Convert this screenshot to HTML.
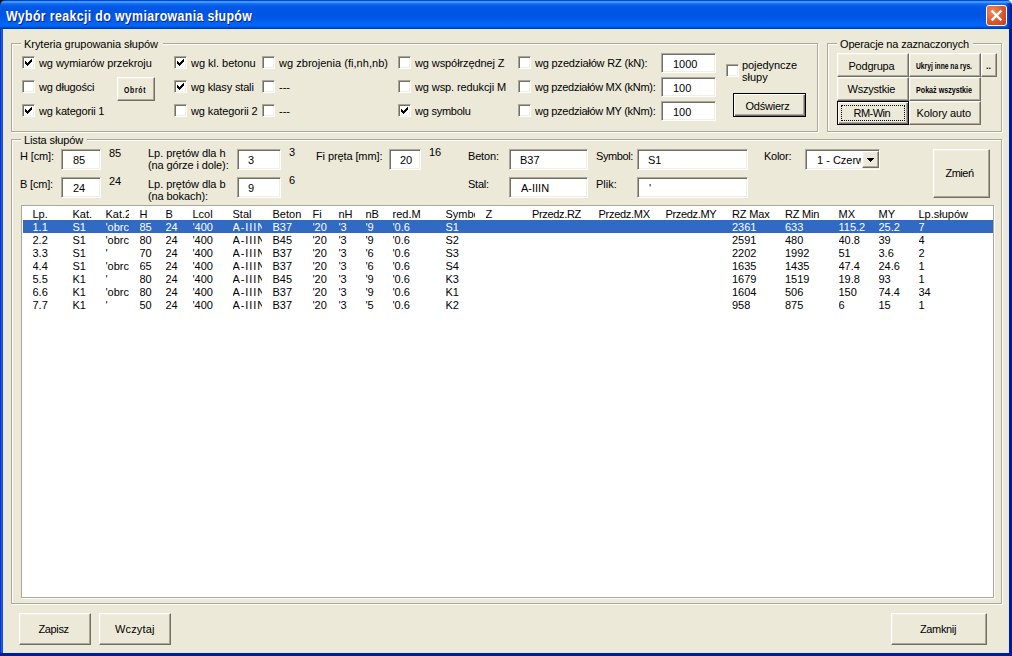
<!DOCTYPE html>
<html><head><meta charset="utf-8"><style>
*{margin:0;padding:0}
html,body{width:1012px;height:656px;overflow:hidden;background:#ECE9D8;position:relative}
body>div,body>svg{position:absolute}
.t,.gt0{position:absolute;font-family:"Liberation Sans",sans-serif;font-size:11px;line-height:13px;white-space:pre;color:#000}
.sm{position:absolute;font-family:"Liberation Sans",sans-serif;font-size:9px;font-weight:bold;line-height:10px;white-space:pre;color:#000}
.gt{position:absolute;background:#ECE9D8}
.title{position:absolute;font-family:"Liberation Sans",sans-serif;font-size:14px;letter-spacing:0.43px;transform:scaleX(0.88);transform-origin:0 0;font-weight:bold;line-height:15px;white-space:pre;color:#fff;text-shadow:1px 1px 0 #0A1E8C}
.eG{position:absolute;border:1px solid #ACA899;box-sizing:border-box}
.eW{position:absolute;border:1px solid #fff;box-sizing:border-box}
.cb{position:absolute;width:13px;height:13px;box-sizing:border-box;background:#fff;border:1px solid;border-color:#ACA899 #fff #fff #ACA899;box-shadow:inset 1px 1px 0 #716F64,inset -1px -1px 0 #F1EFE2}
.inp{position:absolute;box-sizing:border-box;background:#fff;border:1px solid;border-color:#ACA899 #fff #fff #ACA899;box-shadow:inset 1px 1px 0 #716F64,inset -1px -1px 0 #F1EFE2}
.btn{position:absolute;box-sizing:border-box;background:#ECE9D8;border:1px solid;border-color:#fff #716F64 #716F64 #fff;box-shadow:inset -1px -1px 0 #ACA899,inset 1px 1px 0 #F1EFE2}
.btn.def{border:1px solid #000;box-shadow:inset 1px 1px 0 #fff,inset -1px -1px 0 #716F64,inset -2px -2px 0 #ACA899}
.focus{position:absolute;box-sizing:border-box;border:1px dotted #000}
.close{position:absolute;width:21px;height:21px;box-sizing:border-box;border:1px solid #fff;border-radius:3px;background:radial-gradient(circle at 30% 30%,#F08A60,#D8522A 60%,#C43E18)}
</style></head><body>
<div style="left:0;top:0;width:6px;height:6px;background:#101820"></div>
<div style="left:1007px;top:0;width:5px;height:5px;background:#fff"></div>
<div style="left:0;top:0;width:1012px;height:29px;background:linear-gradient(#0047D0 0px,#0047D0 1px,#3D95FF 1px,#3D95FF 3px,#1C78F4 3px,#0A62EC 5px,#0058E6 7px,#0055E2 15px,#005AE8 19px,#0063F5 23px,#0066FA 26px,#0058E0 27px,#003FB8 28px,#0035A8 29px);border-radius:6px 5px 0 0"></div>
<div style="left:1006px;top:3px;width:6px;height:26px;background:linear-gradient(90deg,rgba(0,40,170,0) 0,rgba(0,40,170,0.5) 2px,#0028A8 4px,#001C9C 6px);border-top-right-radius:3px"></div>
<div style="left:0;top:29px;width:3px;height:627px;background:linear-gradient(90deg,#0033CC 0,#0033CC 1px,#2A5BE0 1px,#2A5BE0 2px,#1D4BA8 2px)"></div>
<div style="left:3px;top:29px;width:1px;height:624px;background:#D8EEFF"></div>
<div style="left:1009px;top:29px;width:3px;height:627px;background:#001C9C"></div>
<div style="left:1008px;top:29px;width:1px;height:624px;background:#D8EEFF"></div>
<div style="left:0;top:653px;width:1012px;height:3px;background:#001C9C"></div>
<div style="left:3px;top:652px;width:1006px;height:1px;background:#D8EEFF"></div>
<div style="left:3px;top:29px;width:1006px;height:1px;background:#D8EEFF"></div>
<div class="title" style="left:6px;top:9px">Wybór reakcji do wymiarowania słupów</div>
<div class="close" style="left:986px;top:5px"><svg width="21" height="21" style="position:absolute;left:-1px;top:-1px"><path d="M6.5 6.5L14.5 14.5M14.5 6.5L6.5 14.5" stroke="#fff" stroke-width="2.4" stroke-linecap="square"/></svg></div>
<div class="eW" style="left:12px;top:44px;width:807px;height:89px"></div>
<div class="eG" style="left:11px;top:43px;width:807px;height:89px"></div>
<div class="gt" style="left:21px;top:40px;width:142px;height:8px"></div>
<div class="gt0" style="left:24px;top:38px;letter-spacing:-0.044px;">Kryteria grupowania słupów</div>
<div class="cb" style="left:22px;top:56px"><svg width="7" height="7" style="position:absolute;left:2px;top:2px" shape-rendering="crispEdges"><path d="M6 0h1v3h-1v1h-1v1h-1v1h-1v1h-1v-1h-1v-1h-1v-3h1v1h1v1h1v-1h1v-1h1z" fill="#000"/></svg></div>
<div class="t" style="left:39px;top:57px;letter-spacing:-0.077px;">wg wymiarów przekroju</div>
<div class="cb" style="left:22px;top:80px"></div>
<div class="t" style="left:39px;top:81px;letter-spacing:-0.199px;">wg długości</div>
<div class="cb" style="left:22px;top:104px"><svg width="7" height="7" style="position:absolute;left:2px;top:2px" shape-rendering="crispEdges"><path d="M6 0h1v3h-1v1h-1v1h-1v1h-1v1h-1v-1h-1v-1h-1v-3h1v1h1v1h1v-1h1v-1h1z" fill="#000"/></svg></div>
<div class="t" style="left:39px;top:105px;letter-spacing:-0.184px;">wg kategorii 1</div>
<div class="btn" style="left:117px;top:77px;width:38px;height:24px"></div>
<div class="sm" style="left:124px;top:85px;transform:scaleX(0.7559);transform-origin:0 0;letter-spacing:1.0px;">Obrót</div>
<div class="cb" style="left:174px;top:56px"><svg width="7" height="7" style="position:absolute;left:2px;top:2px" shape-rendering="crispEdges"><path d="M6 0h1v3h-1v1h-1v1h-1v1h-1v1h-1v-1h-1v-1h-1v-3h1v1h1v1h1v-1h1v-1h1z" fill="#000"/></svg></div>
<div class="t" style="left:191px;top:57px;letter-spacing:-0.018px;">wg kl. betonu</div>
<div class="cb" style="left:174px;top:80px"><svg width="7" height="7" style="position:absolute;left:2px;top:2px" shape-rendering="crispEdges"><path d="M6 0h1v3h-1v1h-1v1h-1v1h-1v1h-1v-1h-1v-1h-1v-3h1v1h1v1h1v-1h1v-1h1z" fill="#000"/></svg></div>
<div class="t" style="left:191px;top:81px;letter-spacing:-0.150px;">wg klasy stali</div>
<div class="cb" style="left:174px;top:104px"></div>
<div class="t" style="left:191px;top:105px;letter-spacing:-0.091px;">wg kategorii 2</div>
<div class="cb" style="left:262px;top:56px"></div>
<div class="t" style="left:279px;top:57px;letter-spacing:0.033px;">wg zbrojenia (fi,nh,nb)</div>
<div class="cb" style="left:262px;top:80px"></div>
<div class="t" style="left:279px;top:81px;">---</div>
<div class="cb" style="left:262px;top:104px"></div>
<div class="t" style="left:279px;top:105px;">---</div>
<div class="cb" style="left:398px;top:56px"></div>
<div class="t" style="left:415px;top:57px;letter-spacing:-0.094px;">wg współrzędnej Z</div>
<div class="cb" style="left:398px;top:80px"></div>
<div class="t" style="left:415px;top:81px;letter-spacing:-0.107px;">wg wsp. redukcji M</div>
<div class="cb" style="left:398px;top:104px"><svg width="7" height="7" style="position:absolute;left:2px;top:2px" shape-rendering="crispEdges"><path d="M6 0h1v3h-1v1h-1v1h-1v1h-1v1h-1v-1h-1v-1h-1v-3h1v1h1v1h1v-1h1v-1h1z" fill="#000"/></svg></div>
<div class="t" style="left:415px;top:105px;letter-spacing:-0.238px;">wg symbolu</div>
<div class="cb" style="left:518px;top:56px"></div>
<div class="t" style="left:535px;top:57px;letter-spacing:-0.165px;">wg pzedziałów RZ (kN):</div>
<div class="cb" style="left:518px;top:80px"></div>
<div class="t" style="left:535px;top:81px;letter-spacing:-0.289px;">wg pzedziałów MX (kNm):</div>
<div class="cb" style="left:518px;top:104px"></div>
<div class="t" style="left:535px;top:105px;letter-spacing:-0.281px;">wg pzedziałów MY (kNm):</div>
<div class="inp" style="left:661px;top:53px;width:55px;height:20px"></div>
<div class="t" style="left:673px;top:58px;">1000</div>
<div class="inp" style="left:661px;top:77px;width:55px;height:20px"></div>
<div class="t" style="left:673px;top:82px;">100</div>
<div class="inp" style="left:661px;top:101px;width:55px;height:20px"></div>
<div class="t" style="left:673px;top:106px;">100</div>
<div class="cb" style="left:726px;top:64px"></div>
<div class="t" style="left:742px;top:59px;letter-spacing:-0.066px;">pojedyncze</div>
<div class="t" style="left:742px;top:71px;">słupy</div>
<div class="btn def" style="left:733px;top:93px;width:73px;height:24px"></div>
<div class="t" style="left:745.5px;top:100px;letter-spacing:-0.230px;">Odświerz</div>
<div class="eW" style="left:828px;top:44px;width:175px;height:89px"></div>
<div class="eG" style="left:827px;top:43px;width:175px;height:89px"></div>
<div class="gt" style="left:837px;top:40px;width:136px;height:8px"></div>
<div class="gt0" style="left:840px;top:38px;letter-spacing:-0.154px;">Operacje na zaznaczonych</div>
<div class="btn" style="left:837px;top:53px;width:72px;height:24px"></div>
<div class="t" style="left:848.5px;top:60px;letter-spacing:-0.227px;">Podgrupa</div>
<div class="btn" style="left:909px;top:53px;width:72px;height:24px"></div>
<div class="sm" style="left:916px;top:61px;transform:scaleX(0.7462);transform-origin:0 0;letter-spacing:0px;">Ukryj inne na rys.</div>
<div class="btn" style="left:981px;top:53px;width:16px;height:24px"></div>
<div class="sm" style="left:986px;top:61px;">..</div>
<div class="btn" style="left:837px;top:77px;width:72px;height:24px"></div>
<div class="t" style="left:847.5px;top:83px;letter-spacing:-0.211px;">Wszystkie</div>
<div class="btn" style="left:909px;top:77px;width:72px;height:24px"></div>
<div class="sm" style="left:916px;top:85px;transform:scaleX(0.7938);transform-origin:0 0;letter-spacing:0px;">Pokaż wszystkie</div>
<div class="btn def" style="left:837px;top:101px;width:72px;height:24px"></div>
<div class="focus" style="left:841px;top:105px;width:64px;height:16px"></div>
<div class="t" style="left:853.5px;top:107px;letter-spacing:-0.536px;">RM-Win</div>
<div class="btn" style="left:909px;top:101px;width:72px;height:24px"></div>
<div class="t" style="left:916.5px;top:107px;letter-spacing:-0.096px;">Kolory auto</div>
<div class="eW" style="left:12px;top:140px;width:991px;height:465px"></div>
<div class="eG" style="left:11px;top:139px;width:991px;height:465px"></div>
<div class="gt" style="left:21px;top:136px;width:66px;height:8px"></div>
<div class="gt0" style="left:24px;top:134px;letter-spacing:-0.129px;">Lista słupów</div>
<div class="t" style="left:20px;top:150px;letter-spacing:-0.121px;">H [cm]:</div>
<div class="inp" style="left:61px;top:149px;width:40px;height:21px"></div>
<div class="t" style="left:73px;top:154px;">85</div>
<div class="t" style="left:109px;top:147px;">85</div>
<div class="t" style="left:20px;top:178px;letter-spacing:-0.176px;">B [cm]:</div>
<div class="inp" style="left:61px;top:177px;width:40px;height:21px"></div>
<div class="t" style="left:73px;top:182px;">24</div>
<div class="t" style="left:109px;top:175px;">24</div>
<div class="t" style="left:148px;top:147px;letter-spacing:-0.049px;">Lp. prętów dla h</div>
<div class="t" style="left:148px;top:159px;letter-spacing:-0.108px;">(na górze i dole):</div>
<div class="inp" style="left:237px;top:149px;width:44px;height:21px"></div>
<div class="t" style="left:248px;top:154px;">3</div>
<div class="t" style="left:289px;top:146px;">3</div>
<div class="t" style="left:148px;top:178px;letter-spacing:-0.049px;">Lp. prętów dla b</div>
<div class="t" style="left:148px;top:190px;letter-spacing:-0.096px;">(na bokach):</div>
<div class="inp" style="left:237px;top:177px;width:44px;height:21px"></div>
<div class="t" style="left:248px;top:182px;">9</div>
<div class="t" style="left:289px;top:174px;">6</div>
<div class="t" style="left:316px;top:150px;letter-spacing:-0.103px;">Fi pręta [mm]:</div>
<div class="inp" style="left:389px;top:149px;width:32px;height:21px"></div>
<div class="t" style="left:400px;top:154px;">20</div>
<div class="t" style="left:429px;top:146px;">16</div>
<div class="t" style="left:468px;top:150px;letter-spacing:-0.169px;">Beton:</div>
<div class="t" style="left:468px;top:178px;letter-spacing:-0.223px;">Stal:</div>
<div class="inp" style="left:509px;top:149px;width:79px;height:21px"></div>
<div class="t" style="left:520px;top:154px;">B37</div>
<div class="inp" style="left:509px;top:177px;width:79px;height:21px"></div>
<div class="t" style="left:521px;top:182px;">A-IIIN</div>
<div class="t" style="left:596px;top:150px;letter-spacing:-0.393px;">Symbol:</div>
<div class="t" style="left:596px;top:178px;">Plik:</div>
<div class="inp" style="left:637px;top:149px;width:111px;height:21px"></div>
<div class="t" style="left:648px;top:154px;">S1</div>
<div class="inp" style="left:637px;top:177px;width:111px;height:21px"></div>
<div class="t" style="left:649px;top:182px;">'</div>
<div class="t" style="left:764px;top:150px;letter-spacing:-0.258px;">Kolor:</div>
<div class="inp" style="left:805px;top:149px;width:75px;height:21px"></div>
<div class="t" style="left:817px;top:154px;width:44px;overflow:hidden">1 - Czerwony</div>
<div class="btn" style="left:862px;top:151px;width:17px;height:17px"></div>
<svg style="left:867px;top:158px" width="8" height="5" shape-rendering="crispEdges"><path d="M0 0h7v1h-1v1h-1v1h-1v1h-1v-1h-1v-1h-1v-1h-1z" fill="#000"/></svg>
<div class="btn" style="left:933px;top:149px;width:57px;height:49px"></div>
<div class="t" style="left:945.5px;top:167px;letter-spacing:-0.512px;">Zmień</div>
<div style="left:22px;top:206px;width:972px;height:392px;background:#fff"></div>
<div class="eW" style="left:22px;top:206px;width:973px;height:393px"></div>
<div class="eG" style="left:21px;top:205px;width:973px;height:393px"></div>
<div style="left:23px;top:220px;width:970px;height:13px;background:#316AC5"></div>
<div class="t" style="left:32.5px;top:208px;width:29.0px;overflow:hidden;color:#000;">Lp.</div>
<div class="t" style="left:72.5px;top:208px;width:22.0px;overflow:hidden;color:#000;">Kat.</div>
<div class="t" style="left:105.5px;top:208px;width:23.0px;overflow:hidden;color:#000;">Kat.2</div>
<div class="t" style="left:139.5px;top:208px;width:15.0px;overflow:hidden;color:#000;">H</div>
<div class="t" style="left:165.5px;top:208px;width:16.0px;overflow:hidden;color:#000;">B</div>
<div class="t" style="left:192.5px;top:208px;width:29.0px;overflow:hidden;color:#000;">Lcol</div>
<div class="t" style="left:232.5px;top:208px;width:29.0px;overflow:hidden;color:#000;">Stal</div>
<div class="t" style="left:272.5px;top:208px;width:29.0px;overflow:hidden;color:#000;">Beton</div>
<div class="t" style="left:312.5px;top:208px;width:15.0px;overflow:hidden;color:#000;">Fi</div>
<div class="t" style="left:338.5px;top:208px;width:16.0px;overflow:hidden;color:#000;">nH</div>
<div class="t" style="left:365.5px;top:208px;width:16.0px;overflow:hidden;color:#000;">nB</div>
<div class="t" style="left:392.5px;top:208px;width:42.0px;overflow:hidden;color:#000;">red.M</div>
<div class="t" style="left:445.5px;top:208px;width:29.0px;overflow:hidden;color:#000;">Symbol</div>
<div class="t" style="left:485.5px;top:208px;width:35.5px;overflow:hidden;color:#000;">Z</div>
<div class="t" style="left:532px;top:208px;width:55.5px;overflow:hidden;color:#000;letter-spacing:-0.33px;">Przedz.RZ</div>
<div class="t" style="left:598.5px;top:208px;width:56.0px;overflow:hidden;color:#000;letter-spacing:-0.29px;">Przedz.MX</div>
<div class="t" style="left:665.5px;top:208px;width:55.5px;overflow:hidden;color:#000;letter-spacing:-0.34px;">Przedz.MY</div>
<div class="t" style="left:732px;top:208px;width:42px;overflow:hidden;color:#000;letter-spacing:-0.13px;">RZ Max</div>
<div class="t" style="left:785px;top:208px;width:42.5px;overflow:hidden;color:#000;letter-spacing:-0.2px;">RZ Min</div>
<div class="t" style="left:838.5px;top:208px;width:29.0px;overflow:hidden;color:#000;">MX</div>
<div class="t" style="left:878.5px;top:208px;width:29.0px;overflow:hidden;color:#000;">MY</div>
<div class="t" style="left:918.5px;top:208px;width:60.5px;overflow:hidden;color:#000;">Lp.słupów</div>
<div class="t" style="left:32.5px;top:221px;width:29.0px;overflow:hidden;color:#fff;">1.1</div>
<div class="t" style="left:72.5px;top:221px;width:22.0px;overflow:hidden;color:#fff;">S1</div>
<div class="t" style="left:105.5px;top:221px;width:23.0px;overflow:hidden;color:#fff;">'obrc</div>
<div class="t" style="left:139.5px;top:221px;width:15.0px;overflow:hidden;color:#fff;">85</div>
<div class="t" style="left:165.5px;top:221px;width:16.0px;overflow:hidden;color:#fff;">24</div>
<div class="t" style="left:192.5px;top:221px;width:29.0px;overflow:hidden;color:#fff;">'400</div>
<div class="t" style="left:232.5px;top:221px;width:29.0px;overflow:hidden;color:#fff;letter-spacing:0.9px;">A-IIIN</div>
<div class="t" style="left:272.5px;top:221px;width:29.0px;overflow:hidden;color:#fff;">B37</div>
<div class="t" style="left:312.5px;top:221px;width:15.0px;overflow:hidden;color:#fff;">'20</div>
<div class="t" style="left:338.5px;top:221px;width:16.0px;overflow:hidden;color:#fff;">'3</div>
<div class="t" style="left:365.5px;top:221px;width:16.0px;overflow:hidden;color:#fff;">'9</div>
<div class="t" style="left:392.5px;top:221px;width:42.0px;overflow:hidden;color:#fff;">'0.6</div>
<div class="t" style="left:445.5px;top:221px;width:29.0px;overflow:hidden;color:#fff;">S1</div>
<div class="t" style="left:732px;top:221px;width:42px;overflow:hidden;color:#fff;">2361</div>
<div class="t" style="left:785px;top:221px;width:42.5px;overflow:hidden;color:#fff;">633</div>
<div class="t" style="left:838.5px;top:221px;width:29.0px;overflow:hidden;color:#fff;">115.2</div>
<div class="t" style="left:878.5px;top:221px;width:29.0px;overflow:hidden;color:#fff;">25.2</div>
<div class="t" style="left:918.5px;top:221px;width:60.5px;overflow:hidden;color:#fff;">7</div>
<div class="t" style="left:32.5px;top:234px;width:29.0px;overflow:hidden;color:#000;">2.2</div>
<div class="t" style="left:72.5px;top:234px;width:22.0px;overflow:hidden;color:#000;">S1</div>
<div class="t" style="left:105.5px;top:234px;width:23.0px;overflow:hidden;color:#000;">'obrc</div>
<div class="t" style="left:139.5px;top:234px;width:15.0px;overflow:hidden;color:#000;">80</div>
<div class="t" style="left:165.5px;top:234px;width:16.0px;overflow:hidden;color:#000;">24</div>
<div class="t" style="left:192.5px;top:234px;width:29.0px;overflow:hidden;color:#000;">'400</div>
<div class="t" style="left:232.5px;top:234px;width:29.0px;overflow:hidden;color:#000;letter-spacing:0.9px;">A-IIIN</div>
<div class="t" style="left:272.5px;top:234px;width:29.0px;overflow:hidden;color:#000;">B45</div>
<div class="t" style="left:312.5px;top:234px;width:15.0px;overflow:hidden;color:#000;">'20</div>
<div class="t" style="left:338.5px;top:234px;width:16.0px;overflow:hidden;color:#000;">'3</div>
<div class="t" style="left:365.5px;top:234px;width:16.0px;overflow:hidden;color:#000;">'9</div>
<div class="t" style="left:392.5px;top:234px;width:42.0px;overflow:hidden;color:#000;">'0.6</div>
<div class="t" style="left:445.5px;top:234px;width:29.0px;overflow:hidden;color:#000;">S2</div>
<div class="t" style="left:732px;top:234px;width:42px;overflow:hidden;color:#000;">2591</div>
<div class="t" style="left:785px;top:234px;width:42.5px;overflow:hidden;color:#000;">480</div>
<div class="t" style="left:838.5px;top:234px;width:29.0px;overflow:hidden;color:#000;">40.8</div>
<div class="t" style="left:878.5px;top:234px;width:29.0px;overflow:hidden;color:#000;">39</div>
<div class="t" style="left:918.5px;top:234px;width:60.5px;overflow:hidden;color:#000;">4</div>
<div class="t" style="left:32.5px;top:247px;width:29.0px;overflow:hidden;color:#000;">3.3</div>
<div class="t" style="left:72.5px;top:247px;width:22.0px;overflow:hidden;color:#000;">S1</div>
<div class="t" style="left:105.5px;top:247px;width:23.0px;overflow:hidden;color:#000;">'</div>
<div class="t" style="left:139.5px;top:247px;width:15.0px;overflow:hidden;color:#000;">70</div>
<div class="t" style="left:165.5px;top:247px;width:16.0px;overflow:hidden;color:#000;">24</div>
<div class="t" style="left:192.5px;top:247px;width:29.0px;overflow:hidden;color:#000;">'400</div>
<div class="t" style="left:232.5px;top:247px;width:29.0px;overflow:hidden;color:#000;letter-spacing:0.9px;">A-IIIN</div>
<div class="t" style="left:272.5px;top:247px;width:29.0px;overflow:hidden;color:#000;">B37</div>
<div class="t" style="left:312.5px;top:247px;width:15.0px;overflow:hidden;color:#000;">'20</div>
<div class="t" style="left:338.5px;top:247px;width:16.0px;overflow:hidden;color:#000;">'3</div>
<div class="t" style="left:365.5px;top:247px;width:16.0px;overflow:hidden;color:#000;">'6</div>
<div class="t" style="left:392.5px;top:247px;width:42.0px;overflow:hidden;color:#000;">'0.6</div>
<div class="t" style="left:445.5px;top:247px;width:29.0px;overflow:hidden;color:#000;">S3</div>
<div class="t" style="left:732px;top:247px;width:42px;overflow:hidden;color:#000;">2202</div>
<div class="t" style="left:785px;top:247px;width:42.5px;overflow:hidden;color:#000;">1992</div>
<div class="t" style="left:838.5px;top:247px;width:29.0px;overflow:hidden;color:#000;">51</div>
<div class="t" style="left:878.5px;top:247px;width:29.0px;overflow:hidden;color:#000;">3.6</div>
<div class="t" style="left:918.5px;top:247px;width:60.5px;overflow:hidden;color:#000;">2</div>
<div class="t" style="left:32.5px;top:260px;width:29.0px;overflow:hidden;color:#000;">4.4</div>
<div class="t" style="left:72.5px;top:260px;width:22.0px;overflow:hidden;color:#000;">S1</div>
<div class="t" style="left:105.5px;top:260px;width:23.0px;overflow:hidden;color:#000;">'obrc</div>
<div class="t" style="left:139.5px;top:260px;width:15.0px;overflow:hidden;color:#000;">65</div>
<div class="t" style="left:165.5px;top:260px;width:16.0px;overflow:hidden;color:#000;">24</div>
<div class="t" style="left:192.5px;top:260px;width:29.0px;overflow:hidden;color:#000;">'400</div>
<div class="t" style="left:232.5px;top:260px;width:29.0px;overflow:hidden;color:#000;letter-spacing:0.9px;">A-IIIN</div>
<div class="t" style="left:272.5px;top:260px;width:29.0px;overflow:hidden;color:#000;">B37</div>
<div class="t" style="left:312.5px;top:260px;width:15.0px;overflow:hidden;color:#000;">'20</div>
<div class="t" style="left:338.5px;top:260px;width:16.0px;overflow:hidden;color:#000;">'3</div>
<div class="t" style="left:365.5px;top:260px;width:16.0px;overflow:hidden;color:#000;">'6</div>
<div class="t" style="left:392.5px;top:260px;width:42.0px;overflow:hidden;color:#000;">'0.6</div>
<div class="t" style="left:445.5px;top:260px;width:29.0px;overflow:hidden;color:#000;">S4</div>
<div class="t" style="left:732px;top:260px;width:42px;overflow:hidden;color:#000;">1635</div>
<div class="t" style="left:785px;top:260px;width:42.5px;overflow:hidden;color:#000;">1435</div>
<div class="t" style="left:838.5px;top:260px;width:29.0px;overflow:hidden;color:#000;">47.4</div>
<div class="t" style="left:878.5px;top:260px;width:29.0px;overflow:hidden;color:#000;">24.6</div>
<div class="t" style="left:918.5px;top:260px;width:60.5px;overflow:hidden;color:#000;">1</div>
<div class="t" style="left:32.5px;top:273px;width:29.0px;overflow:hidden;color:#000;">5.5</div>
<div class="t" style="left:72.5px;top:273px;width:22.0px;overflow:hidden;color:#000;">K1</div>
<div class="t" style="left:105.5px;top:273px;width:23.0px;overflow:hidden;color:#000;">'</div>
<div class="t" style="left:139.5px;top:273px;width:15.0px;overflow:hidden;color:#000;">80</div>
<div class="t" style="left:165.5px;top:273px;width:16.0px;overflow:hidden;color:#000;">24</div>
<div class="t" style="left:192.5px;top:273px;width:29.0px;overflow:hidden;color:#000;">'400</div>
<div class="t" style="left:232.5px;top:273px;width:29.0px;overflow:hidden;color:#000;letter-spacing:0.9px;">A-IIIN</div>
<div class="t" style="left:272.5px;top:273px;width:29.0px;overflow:hidden;color:#000;">B45</div>
<div class="t" style="left:312.5px;top:273px;width:15.0px;overflow:hidden;color:#000;">'20</div>
<div class="t" style="left:338.5px;top:273px;width:16.0px;overflow:hidden;color:#000;">'3</div>
<div class="t" style="left:365.5px;top:273px;width:16.0px;overflow:hidden;color:#000;">'9</div>
<div class="t" style="left:392.5px;top:273px;width:42.0px;overflow:hidden;color:#000;">'0.6</div>
<div class="t" style="left:445.5px;top:273px;width:29.0px;overflow:hidden;color:#000;">K3</div>
<div class="t" style="left:732px;top:273px;width:42px;overflow:hidden;color:#000;">1679</div>
<div class="t" style="left:785px;top:273px;width:42.5px;overflow:hidden;color:#000;">1519</div>
<div class="t" style="left:838.5px;top:273px;width:29.0px;overflow:hidden;color:#000;">19.8</div>
<div class="t" style="left:878.5px;top:273px;width:29.0px;overflow:hidden;color:#000;">93</div>
<div class="t" style="left:918.5px;top:273px;width:60.5px;overflow:hidden;color:#000;">1</div>
<div class="t" style="left:32.5px;top:286px;width:29.0px;overflow:hidden;color:#000;">6.6</div>
<div class="t" style="left:72.5px;top:286px;width:22.0px;overflow:hidden;color:#000;">K1</div>
<div class="t" style="left:105.5px;top:286px;width:23.0px;overflow:hidden;color:#000;">'obrc</div>
<div class="t" style="left:139.5px;top:286px;width:15.0px;overflow:hidden;color:#000;">80</div>
<div class="t" style="left:165.5px;top:286px;width:16.0px;overflow:hidden;color:#000;">24</div>
<div class="t" style="left:192.5px;top:286px;width:29.0px;overflow:hidden;color:#000;">'400</div>
<div class="t" style="left:232.5px;top:286px;width:29.0px;overflow:hidden;color:#000;letter-spacing:0.9px;">A-IIIN</div>
<div class="t" style="left:272.5px;top:286px;width:29.0px;overflow:hidden;color:#000;">B37</div>
<div class="t" style="left:312.5px;top:286px;width:15.0px;overflow:hidden;color:#000;">'20</div>
<div class="t" style="left:338.5px;top:286px;width:16.0px;overflow:hidden;color:#000;">'3</div>
<div class="t" style="left:365.5px;top:286px;width:16.0px;overflow:hidden;color:#000;">'9</div>
<div class="t" style="left:392.5px;top:286px;width:42.0px;overflow:hidden;color:#000;">'0.6</div>
<div class="t" style="left:445.5px;top:286px;width:29.0px;overflow:hidden;color:#000;">K1</div>
<div class="t" style="left:732px;top:286px;width:42px;overflow:hidden;color:#000;">1604</div>
<div class="t" style="left:785px;top:286px;width:42.5px;overflow:hidden;color:#000;">506</div>
<div class="t" style="left:838.5px;top:286px;width:29.0px;overflow:hidden;color:#000;">150</div>
<div class="t" style="left:878.5px;top:286px;width:29.0px;overflow:hidden;color:#000;">74.4</div>
<div class="t" style="left:918.5px;top:286px;width:60.5px;overflow:hidden;color:#000;">34</div>
<div class="t" style="left:32.5px;top:299px;width:29.0px;overflow:hidden;color:#000;">7.7</div>
<div class="t" style="left:72.5px;top:299px;width:22.0px;overflow:hidden;color:#000;">K1</div>
<div class="t" style="left:105.5px;top:299px;width:23.0px;overflow:hidden;color:#000;">'</div>
<div class="t" style="left:139.5px;top:299px;width:15.0px;overflow:hidden;color:#000;">50</div>
<div class="t" style="left:165.5px;top:299px;width:16.0px;overflow:hidden;color:#000;">24</div>
<div class="t" style="left:192.5px;top:299px;width:29.0px;overflow:hidden;color:#000;">'400</div>
<div class="t" style="left:232.5px;top:299px;width:29.0px;overflow:hidden;color:#000;letter-spacing:0.9px;">A-IIIN</div>
<div class="t" style="left:272.5px;top:299px;width:29.0px;overflow:hidden;color:#000;">B37</div>
<div class="t" style="left:312.5px;top:299px;width:15.0px;overflow:hidden;color:#000;">'20</div>
<div class="t" style="left:338.5px;top:299px;width:16.0px;overflow:hidden;color:#000;">'3</div>
<div class="t" style="left:365.5px;top:299px;width:16.0px;overflow:hidden;color:#000;">'5</div>
<div class="t" style="left:392.5px;top:299px;width:42.0px;overflow:hidden;color:#000;">'0.6</div>
<div class="t" style="left:445.5px;top:299px;width:29.0px;overflow:hidden;color:#000;">K2</div>
<div class="t" style="left:732px;top:299px;width:42px;overflow:hidden;color:#000;">958</div>
<div class="t" style="left:785px;top:299px;width:42.5px;overflow:hidden;color:#000;">875</div>
<div class="t" style="left:838.5px;top:299px;width:29.0px;overflow:hidden;color:#000;">6</div>
<div class="t" style="left:878.5px;top:299px;width:29.0px;overflow:hidden;color:#000;">15</div>
<div class="t" style="left:918.5px;top:299px;width:60.5px;overflow:hidden;color:#000;">1</div>
<div class="btn" style="left:19px;top:613px;width:72px;height:32px"></div>
<div class="t" style="left:38.5px;top:623px;letter-spacing:-0.368px;">Zapisz</div>
<div class="btn" style="left:99px;top:613px;width:72px;height:32px"></div>
<div class="t" style="left:115px;top:623px;letter-spacing:0.143px;">Wczytaj</div>
<div class="btn" style="left:891px;top:613px;width:96px;height:32px"></div>
<div class="t" style="left:920px;top:623px;letter-spacing:-0.359px;">Zamknij</div>
</body></html>
